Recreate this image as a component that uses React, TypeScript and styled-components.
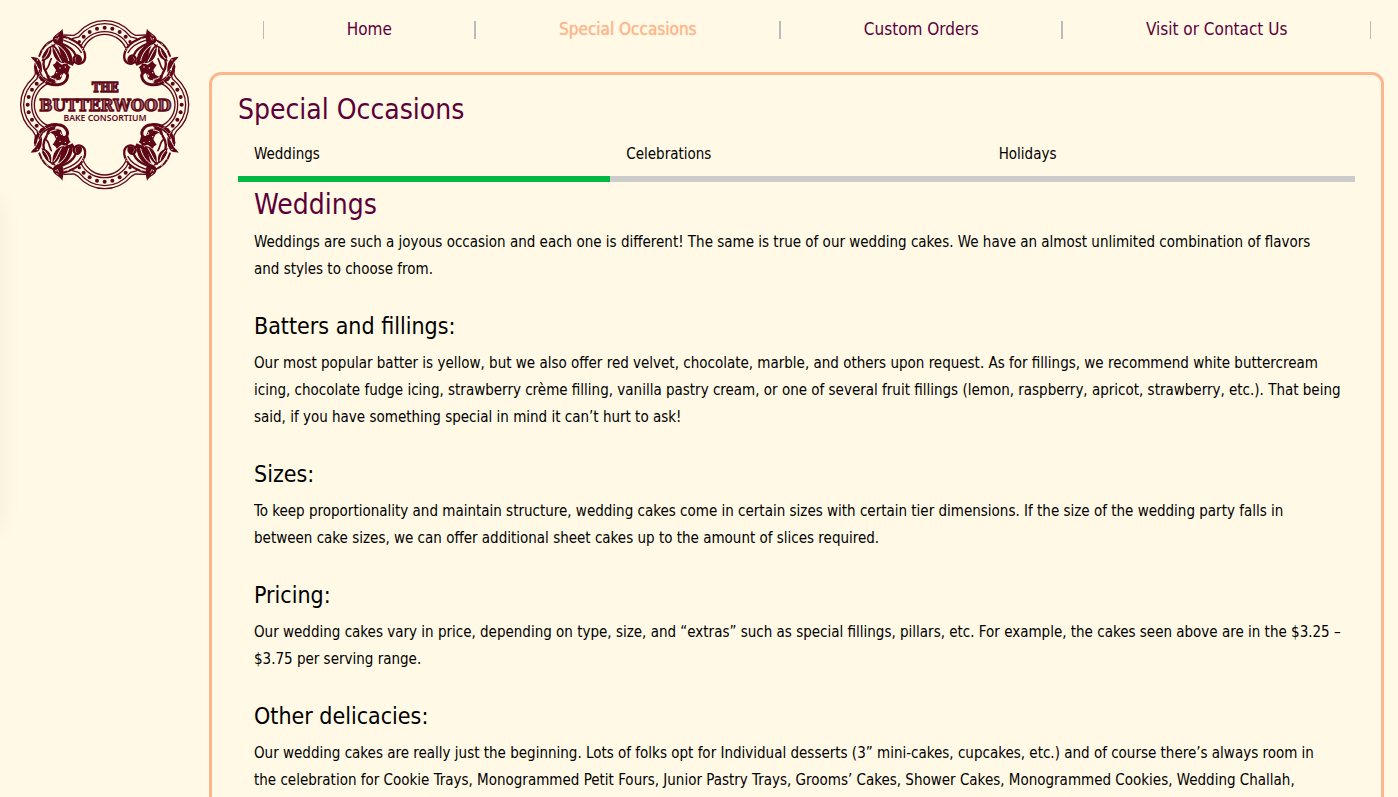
import React, { useState } from "react";
import styled, { createGlobalStyle } from "styled-components";

const colors = {
  cream: "#fff9e6",
  plum: "#5b0039",
  peach: "#fcb78e",
  rule: "#bbbbbb",
  tabIdle: "#cccccc",
  tabActive: "#00b945",
  logo: "#5e0717",
};

const GlobalStyle = createGlobalStyle`
  * { box-sizing: border-box; }
  body {
    margin: 0;
    background: ${colors.cream};
    color: #000;
    font-family: "DejaVu Sans Condensed", "Noto Sans", sans-serif;
  }
`;

const Page = styled.div`
  display: grid;
  grid-template-columns: 209px minmax(0, 1fr);
  height: 100vh;
  overflow-x: hidden;
  overflow-y: auto;
  scrollbar-width: none;
`;

const Drawer = styled.aside`
  position: fixed;
  top: 200px;
  left: -44px;
  width: 40px;
  height: 326px;
  box-shadow: 0 0 28px rgba(0, 0, 0, 0.08);
`;

const Brand = styled.a`
  display: block;
  align-self: start;
  padding: 10px;

  svg { display: block; width: 190px; height: 190px; }
`;

const Column = styled.div`
  padding-right: 14px;
`;

const Nav = styled.nav`
  padding: 21px 13px 33px 54px;
`;

const NavList = styled.ul`
  display: flex;
  margin: 0;
  padding: 0;
  list-style: none;
`;

const NavItem = styled.li`
  flex: 1 1 auto;
  height: 18px;
  border: solid ${colors.rule};
  border-width: 0 1px;
  text-align: center;
`;

const NavLink = styled.a<{ $current?: boolean }>`
  display: block;
  color: ${(p) => (p.$current ? colors.peach : colors.plum)};
  font-size: 17px;
  line-height: 16px;
  text-decoration: none;
  text-shadow: ${(p) => (p.$current ? `0 0 1px ${colors.peach}` : "none")};
`;

const Panel = styled.main`
  padding: 17px 26px 54px;
  border: 3px solid ${colors.peach};
  border-radius: 12px;
`;

const Title = styled.h1`
  margin: 0;
  color: ${colors.plum};
  font-size: 28px;
  font-weight: 400;
  line-height: 36px;
`;

const TabBar = styled.div`
  display: grid;
  grid-template-columns: repeat(3, 1fr);
  margin-top: 3px;
`;

const Tab = styled.button<{ $active: boolean }>`
  height: 51px;
  padding: 0 16px;
  border: 0;
  border-bottom: 6px solid ${(p) => (p.$active ? colors.tabActive : colors.tabIdle)};
  background: none;
  color: #000;
  font: inherit;
  font-size: 15px;
  text-align: left;
  cursor: pointer;
`;

const TabPanel = styled.section`
  padding: 5px 12px 0 16px;
`;

const Heading = styled.h2`
  margin: 0 0 6px;
  color: ${colors.plum};
  font-size: 28px;
  font-weight: 400;
  line-height: 36px;
`;

const Subheading = styled.h3`
  margin: 27px 0 8px;
  font-size: 23px;
  font-weight: 400;
  line-height: 32px;
`;

const Text = styled.p`
  margin: 0;
  font-size: 15px;
  line-height: 27px;
  white-space: pre-line;
`;

const Corner = ({ transform }: { transform?: string }) => (
  <g transform={transform}>
    <g transform="translate(12 12)">
      <path d="M145 44C138 56 124 60 118 70C112 82 122 94 138 93C152 90 150 66 145 44Z" fill={colors.logo} />
      <path d="M50 128C60 130 70 128 76 137C84 148 84 160 84 176C74 166 70 156 66 148C62 140 56 138 50 128Z" fill={colors.logo} />
      <g fill="none" stroke={colors.logo} strokeLinecap="round">
        <path d="M76 126C82 106 98 86 120 78" strokeWidth="6" />
        <path d="M86 130C92 114 104 100 122 92" strokeWidth="5" />
        <path d="M148 68C178 76 208 92 213 122C217 150 190 156 181 143C174 130 187 119 197 128" strokeWidth="7" />
        <path d="M150 79C176 87 194 100 202 116" strokeWidth="4" />
        <path d="M146 90C164 97 178 108 184 122" strokeWidth="7" />
        <path d="M64 158C68 188 96 216 132 212C158 210 168 184 154 174C140 166 126 178 134 190" strokeWidth="9" />
        <path d="M76 170C82 188 98 202 118 204" strokeWidth="5" />
        <path d="M96 124C86 140 86 160 98 178" strokeWidth="7" />
        <path d="M112 134C104 148 106 162 94 168" strokeWidth="5" />
      </g>
      <g fill={colors.logo}>
        <circle cx="194" cy="137" r="10" />
        <path d="M124 84C154 90 176 112 176 142C184 142 186 138 176 156C162 148 150 150 144 136C138 122 140 104 124 84Z" />
        <path d="M112 90C134 98 140 124 152 148C134 148 122 134 118 120C114 108 118 102 112 90Z" />
        <path d="M110 96C88 108 90 126 82 142C104 138 118 122 110 96Z" />
        <path d="M116 152C122 150 126 146 128 140C134 144 138 150 144 152C150 148 156 150 160 148C162 156 168 158 170 160C164 164 166 172 162 178L148 178L140 198L120 204L106 190L120 182L126 168Z" />
        <path d="M96 176C110 184 112 196 128 208C106 210 96 194 96 176Z" />
      </g>
      <g fill="none" stroke={colors.cream} strokeLinecap="round" strokeWidth="3">
        <path d="M132 94C150 104 160 122 164 140" />
        <path d="M120 102C128 112 132 126 142 142" />
        <path d="M106 104C104 116 98 126 90 134" />
        <path d="M124 200C142 202 150 190 146 184C142 180 138 184 140 188" />
        <path d="M108 190C114 194 120 196 126 196" />
        <path d="M134 70L130 78M128 66L132 62M98 92L102 89M160 74L164 76M84 108L88 110M208 110L212 108M74 188L78 185M92 206L95 202" strokeWidth="2" />
      </g>
      <g fill={colors.cream}>
        <circle cx="126" cy="74" r="2" />
        <circle cx="116" cy="84" r="2" />
        <circle cx="138" cy="162" r="2" />
        <circle cx="154" cy="159" r="2" />
        <circle cx="128" cy="176" r="2" />
        <circle cx="88" cy="186" r="2" />
        <circle cx="205" cy="104" r="2" />
        <circle cx="70" cy="138" r="2" />
      </g>
    </g>
  </g>
);

const Lobe = ({ transform }: { transform?: string }) => (
  <g transform={transform} fill="none" stroke={colors.logo}>
    <path d="M160 75L192 76L204 69C228 42 254 32 284 32S340 42 364 69L376 76L408 75" strokeWidth="4" />
    <path d="M186 86L206 81C230 52 256 41 284 41S338 52 362 81L382 86" strokeWidth="4" />
    <path d="M214 106C226 82 252 65 284 65S342 82 354 106" strokeWidth="4" />
    <path d="M221 114C232 90 256 73 284 73S336 90 347 114" strokeWidth="4" />
    <g fill={colors.logo} stroke="none">
      <circle cx="208" cy="95" r="5" />
      <circle cx="221" cy="80" r="6" />
      <circle cx="239" cy="66" r="6" />
      <circle cx="261" cy="56" r="6" />
      <circle cx="284" cy="53" r="6" />
      <circle cx="307" cy="56" r="6" />
      <circle cx="329" cy="66" r="6" />
      <circle cx="347" cy="80" r="6" />
      <circle cx="360" cy="95" r="5" />
    </g>
  </g>
);

const Logo = () => (
  <svg viewBox="0 0 570 570" role="img" aria-label="The Butterwood Bake Consortium">
    <Lobe />
    <Lobe transform="rotate(90 284 284)" />
    <Lobe transform="rotate(180 284 284)" />
    <Lobe transform="rotate(270 284 284)" />
    <Corner />
    <Corner transform="translate(568 0) scale(-1 1)" />
    <Corner transform="translate(0 568) scale(1 -1)" />
    <Corner transform="translate(568 568) scale(-1 -1)" />
    <g
      textAnchor="middle"
      fill="#a56a70"
      stroke={colors.logo}
      strokeWidth="4"
      fontWeight="700"
      fontFamily="'DejaVu Serif Condensed', 'DejaVu Serif', serif"
    >
      <text x="286" y="246" fontSize="36">THE</text>
      <text x="286" y="302" fontSize="52">BUTTERWOOD</text>
    </g>
    <text x="285" y="334" textAnchor="middle" fill={colors.logo} fontFamily="'Noto Sans', sans-serif" fontSize="26" fontWeight="600">
      BAKE CONSORTIUM
    </text>
  </svg>
);

const navLinks = ["Home", "Special Occasions", "Custom Orders", "Visit or Contact Us"];
const tabs = ["Weddings", "Celebrations", "Holidays"];

const intro =
  "Weddings are such a joyous occasion and each one is different! The same is true of our wedding cakes. We have an almost unlimited combination of flavors\nand styles to choose from.";

const sections = [
  {
    title: "Batters and fillings:",
    text: "Our most popular batter is yellow, but we also offer red velvet, chocolate, marble, and others upon request. As for fillings, we recommend white buttercream icing, chocolate fudge icing, strawberry crème filling, vanilla pastry cream, or one of several fruit fillings (lemon, raspberry, apricot, strawberry, etc.). That being said, if you have something special in mind it can’t hurt to ask!",
  },
  {
    title: "Sizes:",
    text: "To keep proportionality and maintain structure, wedding cakes come in certain sizes with certain tier dimensions. If the size of the wedding party falls in between cake sizes, we can offer additional sheet cakes up to the amount of slices required.",
  },
  {
    title: "Pricing:",
    text: "Our wedding cakes vary in price, depending on type, size, and “extras” such as special fillings, pillars, etc. For example, the cakes seen above are in the $3.25 – $3.75 per serving range.",
  },
  {
    title: "Other delicacies:",
    text: "Our wedding cakes are really just the beginning. Lots of folks opt for Individual desserts (3” mini-cakes, cupcakes, etc.) and of course there’s always room in\nthe celebration for Cookie Trays, Monogrammed Petit Fours, Junior Pastry Trays, Grooms’ Cakes, Shower Cakes, Monogrammed Cookies, Wedding Challah,",
  },
];

export default function App() {
  const [active, setActive] = useState(0);
  return (
    <>
      <GlobalStyle />
      <Page>
        <Brand href="#home">
          <Logo />
        </Brand>
        <Column>
          <Nav>
            <NavList>
              {navLinks.map((label) => (
                <NavItem key={label}>
                  <NavLink href="#" $current={label === "Special Occasions"}>{label}</NavLink>
                </NavItem>
              ))}
            </NavList>
          </Nav>
          <Panel>
            <Title>Special Occasions</Title>
            <TabBar role="tablist">
              {tabs.map((label, i) => (
                <Tab key={label} role="tab" aria-selected={i === active} $active={i === active} onClick={() => setActive(i)}>
                  {label}
                </Tab>
              ))}
            </TabBar>
            <TabPanel role="tabpanel">
              <Heading>Weddings</Heading>
              <Text>{intro}</Text>
              {sections.map((s) => (
                <React.Fragment key={s.title}>
                  <Subheading>{s.title}</Subheading>
                  <Text>{s.text}</Text>
                </React.Fragment>
              ))}
            </TabPanel>
          </Panel>
        </Column>
        <Drawer aria-hidden="true" />
      </Page>
    </>
  );
}
